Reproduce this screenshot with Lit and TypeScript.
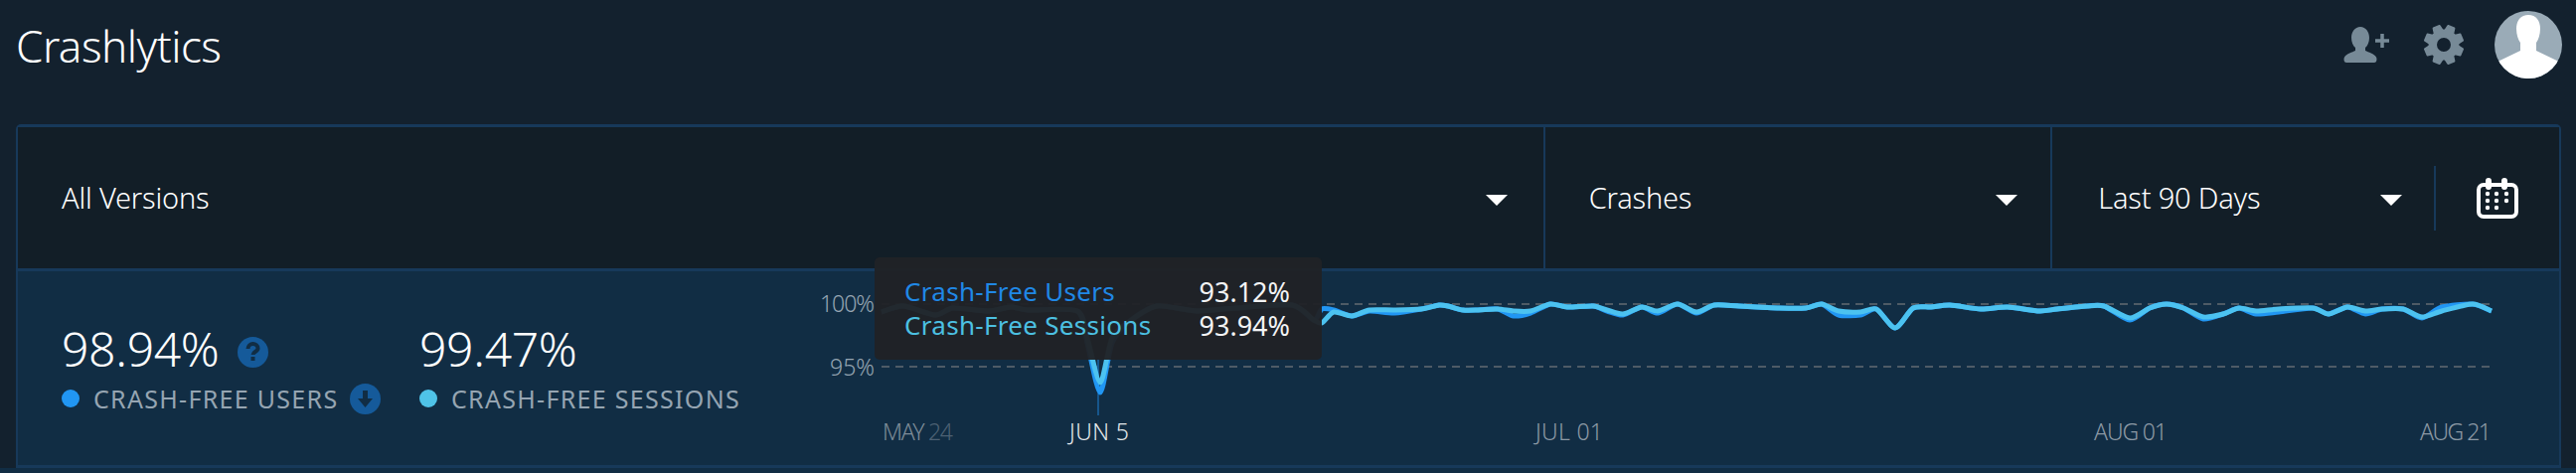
import { LitElement, html, css, svg } from 'lit';
import { customElement } from 'lit/decorators.js';

type Pt = [number, number];

// shared part of both series, sampled off the chart
const SESSIONS: Pt[] = [
  [887, 314], [909, 308], [941, 317], [959, 310], [994, 313], [1017, 309], [1034, 312], [1084, 313],
  [1094, 340], [1107, 385], [1119, 340], [1137, 323], [1164, 308], [1204, 313], [1244, 310], [1300, 307],
  [1322, 322], [1330, 325], [1342, 314], [1360, 318], [1378, 312], [1403, 312], [1430, 311], [1448, 307],
  [1457, 308], [1472, 312], [1487, 312], [1507, 311], [1523, 313], [1540, 313], [1560, 306], [1577, 309],
  [1603, 308], [1617, 312], [1633, 316], [1652, 309], [1668, 313], [1688, 306], [1707, 314], [1725, 307],
  [1750, 308], [1790, 310], [1817, 310], [1833, 306], [1850, 313], [1872, 314], [1888, 311], [1907, 330],
  [1925, 310], [1943, 309], [1962, 307], [1993, 311], [2020, 309], [2052, 313], [2070, 311], [2100, 308],
  [2117, 308], [2143, 320], [2163, 310], [2180, 306], [2197, 310], [2217, 319], [2237, 316], [2253, 310],
  [2270, 313], [2293, 311], [2327, 310], [2343, 316], [2362, 309], [2380, 313], [2397, 311], [2418, 311],
  [2437, 319], [2457, 313], [2488, 306], [2507, 313],
];

const USERS: Pt[] = SESSIONS.map(([x, y]): Pt => {
  const moved: Record<number, number> = {
    1094: 345, 1107: 395, 1119: 345, 1330: 311, 1342: 312, 1378: 313, 1403: 315, 1523: 318, 1540: 315,
    1617: 313, 1633: 317, 1668: 315, 1707: 315, 1850: 317, 1872: 317, 2143: 322, 2217: 321, 2270: 316,
    2293: 314, 2380: 316, 2437: 320, 2457: 309,
  };
  return [x, moved[x] ?? y];
});

function smooth(pts: Pt[]) {
  let d = `M${pts[0][0]} ${pts[0][1]}`;
  for (let i = 0; i < pts.length - 1; i++) {
    const p0 = pts[Math.max(0, i - 1)];
    const p1 = pts[i];
    const p2 = pts[i + 1];
    const p3 = pts[Math.min(pts.length - 1, i + 2)];
    const c1x = p1[0] + (p2[0] - p0[0]) / 8;
    const c1y = p1[1] + (p2[1] - p0[1]) / 8;
    const c2x = p2[0] - (p3[0] - p1[0]) / 8;
    const c2y = p2[1] - (p3[1] - p1[1]) / 8;
    d += `C${c1x} ${c1y} ${c2x} ${c2y} ${p2[0]} ${p2[1]}`;
  }
  return d;
}

function gearPath(cx: number, cy: number) {
  const teeth = 8;
  const outer = 19.5;
  const inner = 14.5;
  let d = '';
  for (let i = 0; i < teeth; i++) {
    const a = ((i * 360) / teeth + 22.5) * (Math.PI / 180);
    const at = (r: number, off: number) =>
      `${(cx + r * Math.cos(a + off)).toFixed(2)} ${(cy + r * Math.sin(a + off)).toFixed(2)}`;
    d += `${i ? 'L' : 'M'}${at(inner, -0.3)}L${at(outer, -0.17)}L${at(outer, 0.17)}L${at(inner, 0.3)}`;
  }
  d += 'Z';
  d += `M${cx + 8} ${cy}a8 8 0 1 0 -16 0a8 8 0 1 0 16 0Z`;
  return d;
}

const CHART_LEFT = 800;
const CHART_TOP = 273;

@customElement('app-root')
export class AppRoot extends LitElement {
  static styles = css`
    :host {
      display: block;
      height: 476px;
      overflow: hidden;
      background: #13212e;
      color: #fff;
      font-family: 'Noto Sans', 'Open Sans', sans-serif;
    }
    .top {
      height: 125px;
      box-sizing: border-box;
      padding: 11px 14px 0 16px;
      display: flex;
      align-items: flex-start;
    }
    .title {
      flex: 1;
      font-size: 44px;
      font-weight: 300;
      line-height: 62px;
      margin-top: 4px;
      letter-spacing: -0.5px;
    }
    .top-icons {
      display: flex;
      align-items: center;
      gap: 30px;
    }
    .top-icons svg {
      display: block;
    }
    .top-icons .add {
      margin-right: 3px;
    }
    .card {
      margin: 0 15px 0 16px;
      border: solid #17395a;
      border-width: 3px 2px 0 2px;
      border-radius: 5px 5px 0 0;
    }
    .toolbar {
      display: flex;
      height: 142px;
      background: #121e27;
      border-bottom: 3px solid #17395a;
    }
    .drop {
      display: flex;
      align-items: center;
      box-sizing: border-box;
      font-size: 29px;
      font-weight: 300;
      letter-spacing: -0.2px;
      border-left: 2px solid #17395a;
    }
    .drop span {
      flex: 1;
      margin-bottom: 2px;
    }
    .drop.versions {
      width: 1536px;
      padding: 0 36px 0 44px;
      border-left: 0;
    }
    .drop.kind {
      width: 511px;
      padding: 0 33px 0 44px;
    }
    .drop.range {
      width: 386px;
      padding: 0 32px 0 46px;
    }
    .arrow {
      width: 0;
      height: 0;
      margin-top: 5px;
      border: solid transparent;
      border-width: 11px 11px 0;
      border-top-color: #fff;
    }
    .cal {
      flex: 1;
      display: flex;
      align-items: center;
      justify-content: flex-end;
      padding-right: 41px;
    }
    .cal::before {
      content: '';
      width: 2px;
      height: 65px;
      background: #17395a;
      margin-right: 41px;
    }
    .cal svg {
      display: block;
    }
    .panel {
      height: 198px;
      box-sizing: border-box;
      background: #112d44;
      border-bottom: 3px solid #17395a;
      position: relative;
      display: flex;
      align-items: flex-start;
      padding: 52px 0 0 44px;
      gap: 36px;
    }
    .metric {
      display: flex;
      flex-direction: column;
      gap: 7px;
    }
    .metric.users {
      width: 324px;
    }
    .value {
      display: flex;
      align-items: center;
      gap: 18px;
      font-size: 48px;
      line-height: 52px;
      font-weight: 300;
      letter-spacing: -0.3px;
      height: 52px;
    }
    .legend {
      display: flex;
      align-items: center;
      font-size: 25px;
      line-height: 34px;
      color: #96a5b2;
      letter-spacing: 1.3px;
      white-space: nowrap;
    }
    .dot {
      width: 18px;
      height: 18px;
      border-radius: 50%;
      margin-right: 14px;
      background: #2196f3;
    }
    .dot.light {
      background: #4fc3e8;
    }
    .badge {
      display: block;
      flex: none;
      width: 31px;
      height: 31px;
      margin-left: 12px;
    }
    .value .badge {
      margin: 6px 0 0;
    }
    .chart {
      position: absolute;
      display: block;
    }
    .chart text {
      font-family: 'Noto Sans', sans-serif;
      font-weight: 300;
    }
    .tooltip {
      position: absolute;
      left: 862px;
      top: -14px;
      width: 450px;
      height: 103px;
      box-sizing: border-box;
      padding: 17px 32px 0 30px;
      background: rgba(32, 34, 39, 0.96);
      border-radius: 5px;
      display: grid;
      grid-template-columns: 1fr auto;
      grid-auto-rows: 34px;
      align-items: center;
      font-size: 26px;
      letter-spacing: 0.3px;
    }
    .tooltip .u {
      color: #2088e6;
    }
    .tooltip .s {
      color: #4cc0e2;
    }
    .tooltip .n {
      color: #f2f3f4;
      font-size: 27px;
      letter-spacing: 0;
      text-align: right;
    }
    .rest {
      height: 8px;
      background: #112d44;
    }
  `;

  render() {
    return html`
      <div class="top">
        <div class="title">Crashlytics</div>
        <div class="top-icons">
          <svg class="add" width="47" height="38" viewBox="0 0 47 38">
            <path
              fill="#778a97"
              d="M17 1c5.500 0 9 5 9 11 0 4-1.500 8-4 10v3c3 1.500 9 3 11 6.500 1 2 .5 5.500-2 5.500H3c-2.500 0-3-3.500-2-5.500 2-3.500 8-5 11-6.500v-3c-2.500-2-4-6-4-10 0-6 3.500-11 9-11z"
            />
            <path d="M39 8v14M32 15h14" stroke="#778a97" stroke-width="3.5" fill="none" />
          </svg>
          <svg width="42" height="42" viewBox="0 0 42 42">
            <path
              fill="#778a97"
              stroke="#778a97"
              stroke-width="2"
              stroke-linejoin="round"
              fill-rule="evenodd"
              d=${gearPath(21, 21)}
            />
          </svg>
          <svg width="68" height="68" viewBox="0 0 68 68">
            <defs><clipPath id="av"><circle cx="34" cy="34" r="34" /></clipPath></defs>
            <circle cx="34" cy="34" r="34" fill="#9aabb7" />
            <path
              clip-path="url(#av)"
              fill="#fff"
              d="M34 4c8 0 12 6 12 14 0 6-2 11-4 14v8l27 13v15H-1V53l27-13v-8c-2-3-4-8-4-14 0-8 4-14 12-14z"
            />
          </svg>
        </div>
      </div>
      <div class="card">
        <div class="toolbar">
          <div class="drop versions"><span>All Versions</span><i class="arrow"></i></div>
          <div class="drop kind"><span>Crashes</span><i class="arrow"></i></div>
          <div class="drop range"><span>Last 90 Days</span><i class="arrow"></i></div>
          <div class="cal">
            <svg width="42" height="41" viewBox="0 0 42 41" fill="none">
              <rect x="2" y="7" width="38" height="32" rx="5" stroke="#fff" stroke-width="4" />
              <path d="M12 3v6M28 3v6" stroke="#fff" stroke-width="6" stroke-linecap="round" />
              <g fill="#fff">
                ${[11, 20, 30].map((x) => [16, 23].map((y) => svg`<circle cx=${x} cy=${y} r="2.200" />`))}
                ${[11, 20].map((x) => svg`<circle cx=${x} cy="30" r="2.200" />`)}
              </g>
            </svg>
          </div>
        </div>
        <div class="panel">
          <div class="metric users">
            <div class="value">
              98.94%
              <svg class="badge" viewBox="0 0 31 31">
                <circle cx="15.500" cy="15.500" r="15.500" fill="#155a9a" />
                <path d="M10.500 12c0-3 2.500-5 5-5s5 2 5 4.500c0 3.500-5 3.500-5 6.500" fill="none" stroke="#112d44" stroke-width="4" />
                <rect x="13.500" y="20" width="4" height="4" fill="#112d44" />
              </svg>
            </div>
            <div class="legend">
              <i class="dot"></i>CRASH-FREE USERS
              <svg class="badge" viewBox="0 0 31 31">
                <circle cx="15.500" cy="15.500" r="15.500" fill="#155a9a" />
                <path d="M13 7h5v8h5l-7.500 9L8 15h5z" fill="#112d44" />
              </svg>
            </div>
          </div>
          <div class="metric">
            <div class="value">99.47%</div>
            <div class="legend"><i class="dot light"></i>CRASH-FREE SESSIONS</div>
          </div>
          ${this.renderChart()}
          <div class="tooltip">
            <span class="u">Crash-Free Users</span><span class="n">93.12%</span>
            <span class="s">Crash-Free Sessions</span><span class="n">93.94%</span>
          </div>
        </div>
      </div>
      <div class="rest"></div>
    `;
  }

  // svg space uses page coordinates, the viewBox maps it into the panel
  private renderChart() {
    const ticks = [
      [1106, 60, 'JUN 5', '#e4e8eb', 'middle'],
      [1579, 68, 'JUL 01', '#8c99a4', 'middle'],
      [2144, 74, 'AUG 01', '#8c99a4', 'middle'],
      [2507, 72, 'AUG 21', '#8c99a4', 'end'],
    ];
    return html`
      <svg
        class="chart"
        style="left:${CHART_LEFT - 18}px;top:0"
        width="1740"
        height="195"
        viewBox="${CHART_LEFT} ${CHART_TOP} 1740 195"
      >
        ${svg`
          <path d="M887 306H2508M887 369H2508" stroke="#4e5b66" stroke-width="2" stroke-dasharray="8 6" fill="none" />
          <text x="880" y="314" text-anchor="end" font-size="23" textLength="55" fill="#96a5b2">100%</text>
          <text x="880" y="378" text-anchor="end" font-size="23" textLength="45" fill="#96a5b2">95%</text>
          <path d="M1105 362V418" stroke="#17568c" stroke-width="2" />
          <path d=${smooth(USERS)} fill="none" stroke="#2196f3" stroke-width="5" stroke-linejoin="round" />
          <path d=${smooth(SESSIONS)} fill="none" stroke="#4cc2f0" stroke-width="5" stroke-linejoin="round" />
          <text x="888" y="443" font-size="23" textLength="71" fill="#7e8c98">MAY <tspan fill="#4d6173">24</tspan></text>
          ${ticks.map(
            ([x, len, label, fill, anchor]) =>
              svg`<text x=${x} y="443" font-size="23" textLength=${len} fill=${fill} text-anchor=${anchor}>${label}</text>`,
          )}
        `}
      </svg>
    `;
  }
}
